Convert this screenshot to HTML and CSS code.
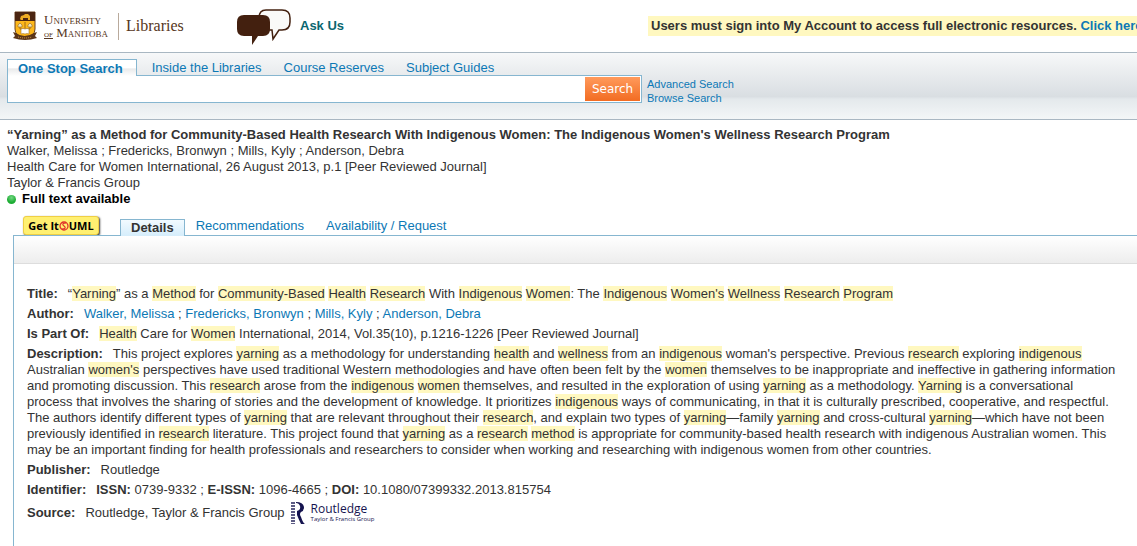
FILE: index.html
```html
<!DOCTYPE html>
<html lang="en">
<head>
<meta charset="utf-8">
<title>University of Manitoba Libraries - One Stop Search</title>
<link rel="stylesheet" href="styles.css">
</head>
<body>
<header class="masthead">
  <div class="brand">
    <svg class="crest" viewBox="0 0 26 30" aria-hidden="true">
      <path d="M3 1h20v17q0 7-10 10Q3 25 3 18z" fill="#fdb71a" stroke="#6a431f"/>
      <path d="M3 1h20v9H3z" fill="#4b2511"/>
      <path d="M8 8l1-3 3-1 1-1h3l2 2v4h-2V7h-5v2H9z" fill="#edab23"/>
      <path d="M6 14l2-2 2 2v2H6zM16 14l2-2 2 2v2h-4z" fill="#f5e6b4" stroke="#8b652a" stroke-width=".6"/>
      <path d="M13 11v6M8 16v2h10v-2" fill="none" stroke="#8b5a16" stroke-width=".8"/>
      <path d="M9 18q2-1 4 0 2-1 4 0v5q-2-1-4 0-2-1-4 0z" fill="#fff" stroke="#a7782a" stroke-width=".6"/>
      <path d="M1 21l3 1q8 6 18 0l3-1-2 4 2 2q-12 4-24 0l2-2z" fill="#5b3518"/>
      <path d="M6 26q7 2 14 0" fill="none" stroke="#d7a249" stroke-dasharray="1 1"/>
    </svg>
    <div class="university"><span>University</span><span><small>of</small> Manitoba</span></div>
    <span class="unit">Libraries</span>
  </div>
  <a class="ask" href="#ask">
    <svg class="bubbles" viewBox="0 -2 56 38" aria-hidden="true">
      <path d="M30 1h16q8 0 8 8v4q0 8-8 8h-3l-6 9-1-9h-6q-7 0-7-8V9q0-8 7-8z" fill="#fafaf8" stroke="#43200f" stroke-width="1.5"/>
      <path d="M9 6h18q7 0 7 7v7q0 7-7 7h-5l-6 9v-9H8q-7 0-7-7v-7q0-7 7-7z" fill="#43200f"/>
    </svg>
    <span>Ask Us</span>
  </a>
  <p class="notice">Users must sign into My Account to access full electronic resources. <a href="#signin">Click here</a></p>
</header>

<form class="search" role="search">
  <nav class="search-tabs">
    <a class="current" href="#all">One Stop Search</a>
    <a href="#inside">Inside the Libraries</a>
    <a href="#reserves">Course Reserves</a>
    <a href="#guides">Subject Guides</a>
  </nav>
  <div class="search-row">
    <div class="search-box">
      <input type="text" aria-label="Search for">
      <button type="submit">Search</button>
    </div>
    <div class="search-links">
      <a href="#advanced">Advanced Search</a>
      <a href="#browse">Browse Search</a>
    </div>
  </div>
</form>

<main>
  <section class="summary">
    <h1>“Yarning” as a Method for Community-Based Health Research With Indigenous Women: The Indigenous Women's Wellness Research Program</h1>
    <p>Walker, Melissa ; Fredericks, Bronwyn ; Mills, Kyly ; Anderson, Debra</p>
    <p>Health Care for Women International, 26 August 2013, p.1 [Peer Reviewed Journal]</p>
    <p>Taylor &amp; Francis Group</p>
    <p class="available"><i class="dot"></i>Full text available</p>
  </section>

  <nav class="record-tabs">
    <a class="get-it" href="#getit">Get It<svg viewBox="0 0 10 10" aria-hidden="true"><circle cx="5" cy="5" r="4" fill="none" stroke="#e0312b" stroke-width="1.3"/><path d="M7 2Q3 2 4 4l2 2q1 2-3 2" fill="none" stroke="#e0312b" stroke-width="1.2"/></svg>UML</a>
    <a class="tab current" href="#details">Details</a>
    <a class="tab" href="#recommendations">Recommendations</a>
    <a class="tab" href="#availability">Availability / Request</a>
  </nav>

  <section class="record">
    <div class="toolbar"></div>
    <div class="fields">
      <p><b class="label">Title:</b>“<mark>Yarning</mark>” as a <mark>Method</mark> for <mark>Community-Based</mark> <mark>Health</mark> <mark>Research</mark> With <mark>Indigenous</mark> <mark>Women</mark>: The <mark>Indigenous</mark> <mark>Women's</mark> <mark>Wellness</mark> <mark>Research</mark> <mark>Program</mark></p>
      <p><b class="label">Author:</b><a href="#walker">Walker, Melissa</a> ; <a href="#fredericks">Fredericks, Bronwyn</a> ; <a href="#mills">Mills, Kyly</a> ; <a href="#anderson">Anderson, Debra</a></p>
      <p><b class="label">Is Part Of:</b><mark>Health</mark> Care for <mark>Women</mark> International, 2014, Vol.35(10), p.1216-1226 [Peer Reviewed Journal]</p>
      <p><b class="label">Description:</b>This project explores <mark>yarning</mark> as a methodology for understanding <mark>health</mark> and <mark>wellness</mark> from an <mark>indigenous</mark> woman's perspective. Previous <mark>research</mark> exploring <mark>indigenous</mark><br>
        Australian <mark>women's</mark> perspectives have used traditional Western methodologies and have often been felt by the <mark>women</mark> themselves to be inappropriate and ineffective in gathering information<br>
        and promoting discussion. This <mark>research</mark> arose from the <mark>indigenous</mark> <mark>women</mark> themselves, and resulted in the exploration of using <mark>yarning</mark> as a methodology. <mark>Yarning</mark> is a conversational<br>
        process that involves the sharing of stories and the development of knowledge. It prioritizes <mark>indigenous</mark> ways of communicating, in that it is culturally prescribed, cooperative, and respectful.<br>
        The authors identify different types of <mark>yarning</mark> that are relevant throughout their <mark>research</mark>, and explain two types of <mark>yarning</mark>—family <mark>yarning</mark> and cross-cultural <mark>yarning</mark>—which have not been<br>
        previously identified in <mark>research</mark> literature. This project found that <mark>yarning</mark> as a <mark>research</mark> <mark>method</mark> is appropriate for community-based health research with indigenous Australian women. This<br>
        may be an important finding for health professionals and researchers to consider when working and researching with indigenous women from other countries.</p>
      <p><b class="label">Publisher:</b>Routledge</p>
      <p><b class="label">Identifier:</b><b>ISSN:</b> 0739-9332 ; <b>E-ISSN:</b> 1096-4665 ; <b>DOI:</b> 10.1080/07399332.2013.815754</p>
      <div class="source">
        <span><b class="label">Source:</b>Routledge, Taylor &amp; Francis Group</span>
        <svg class="publisher-mark" viewBox="0 0 14 22" aria-hidden="true">
          <path d="M1 0v22M3 0v22" stroke="#171650" stroke-width="1.4" stroke-dasharray="2 1"/>
          <path d="M5 0q7 0 8 5 0 4-3 5-2 2 0 5 2 6 4 7H10Q8 18 6 13V9q4-1 3-5Q8 1 5 1z" fill="#15134f"/>
        </svg>
        <span class="publisher"><span>Routledge</span><small>Taylor &amp; Francis Group</small></span>
      </div>
    </div>
  </section>
</main>
</body>
</html>
```

FILE: styles.css
```css
* { box-sizing: border-box; }

body {
  margin: 0;
  min-height: 100vh;
  display: flex;
  flex-direction: column;
  overflow-x: hidden;
  background: #fff;
  color: #333;
  font: 13px/16px "Liberation Sans", Arial, sans-serif;
}

h1, p { margin: 0; font-size: 13px; }
a { color: #0c78b5; text-decoration: none; }

.masthead {
  display: flex;
  align-items: center;
  height: 53px;
  padding-left: 12px;
  border-bottom: 1px solid #a9b7c2;
  white-space: nowrap;
  overflow: hidden;
}
.brand {
  display: flex;
  align-items: center;
  width: 224px;
  flex: none;
  color: #563621;
  font-family: "Liberation Serif", "Times New Roman", serif;
}
.crest { width: 26px; height: 30px; margin-right: 6px; }
.university {
  display: flex;
  flex-direction: column;
  width: 75px;
  border-right: 1px solid #b9aa9c;
  font-size: 13px;
  line-height: 13px;
  font-variant: small-caps;
}
.university small { font-size: 10px; text-decoration: underline; }
.unit { padding-left: 7px; font-size: 16px; line-height: 20px; }

.ask {
  display: flex;
  align-items: center;
  gap: 8px;
  width: 412px;
  flex: none;
  color: #0a6670;
  font-weight: bold;
}
.bubbles { width: 56px; height: 38px; }
.notice {
  flex: none;
  padding: 2px 3px;
  background: #fff8c0;
  font-weight: bold;
}

.search {
  padding: 6px 7px 14px;
  border-bottom: 1px solid #a9b7c2;
  background: linear-gradient(#f7f8f9, #d9dee2 66%, #e4e9ec 70%, #f3f6f7);
}
.search-tabs { display: flex; height: 16px; line-height: 17px; }
.search-tabs a { padding: 0 14px 0 8px; }
.search-tabs .current {
  position: relative;
  height: 17px;
  padding: 0 13px 0 10px;
  margin-right: 7px;
  border: 1px solid #86b6d0;
  border-bottom: 0;
  background: linear-gradient(#fff 50%, #e9eaeb 55%, #fff);
  font-weight: bold;
}
.search-row { display: flex; align-items: flex-start; gap: 5px; }
.search-box {
  display: flex;
  width: 635px;
  height: 28px;
  padding: 1px;
  border: 1px solid #86b6d0;
  background: #fff;
}
.search-box input {
  flex: 1;
  min-width: 0;
  padding: 0 6px;
  border: 0;
  background: #fff;
  font: inherit;
}
.search-box button {
  width: 55px;
  padding: 0;
  border: 0;
  background: linear-gradient(#ff9a5c, #f26c22);
  color: #fff;
  font: 12px "DejaVu Sans", Verdana, sans-serif;
}
.search-links {
  display: flex;
  flex-direction: column;
  padding-top: 2px;
  font-size: 11px;
  line-height: 14px;
}

main { display: flex; flex-direction: column; flex: 1; }
.summary { padding: 7px 7px 0; }
.available { display: flex; align-items: center; gap: 6px; color: #000; font-weight: bold; }
.dot {
  width: 9px;
  height: 9px;
  border-radius: 50%;
  background: radial-gradient(circle at 50% 30%, #73d783, #1ead34 60%);
}

.record-tabs { display: flex; align-items: flex-end; height: 28px; padding-left: 23px; }
.get-it {
  display: flex;
  align-items: center;
  justify-content: center;
  width: 76px;
  height: 19px;
  margin-right: 21px;
  border: 1px solid #efcf45;
  border-radius: 3px;
  background: #fff071;
  box-shadow: 1px 1px 2px #333;
  color: #000;
  font: bold 11px "Open Sans", "DejaVu Sans", sans-serif;
}
.get-it svg { width: 10px; height: 10px; }
.tab { padding: 0 11px 1px; line-height: 16px; }
.tab.current {
  position: relative;
  height: 17px;
  margin-bottom: -1px;
  padding: 0 10px;
  border: 1px solid #86b6d0;
  border-bottom: 0;
  background: linear-gradient(#f2faff, #d5edfb);
  color: #333;
  font-weight: bold;
}

.record {
  flex: 1;
  margin-left: 13px;
  border-top: 1px solid #86b6d0;
  border-left: 1px solid #86b6d0;
}
.toolbar { height: 28px; border-bottom: 1px solid #ddd; background: linear-gradient(#fff, #ededed); }
.fields { display: flex; flex-direction: column; gap: 4px; padding: 22px 4px 12px 13px; }
.label { margin-right: 10px; }
mark { background: #fff8c0; color: inherit; }
.source { display: flex; align-items: center; gap: 6px; }
.publisher-mark { width: 14px; height: 22px; }
.publisher { display: flex; flex-direction: column; color: #15134f; font: 12px/12px "Open Sans", sans-serif; }
.publisher small { font-size: 6px; line-height: 8px; }
```
